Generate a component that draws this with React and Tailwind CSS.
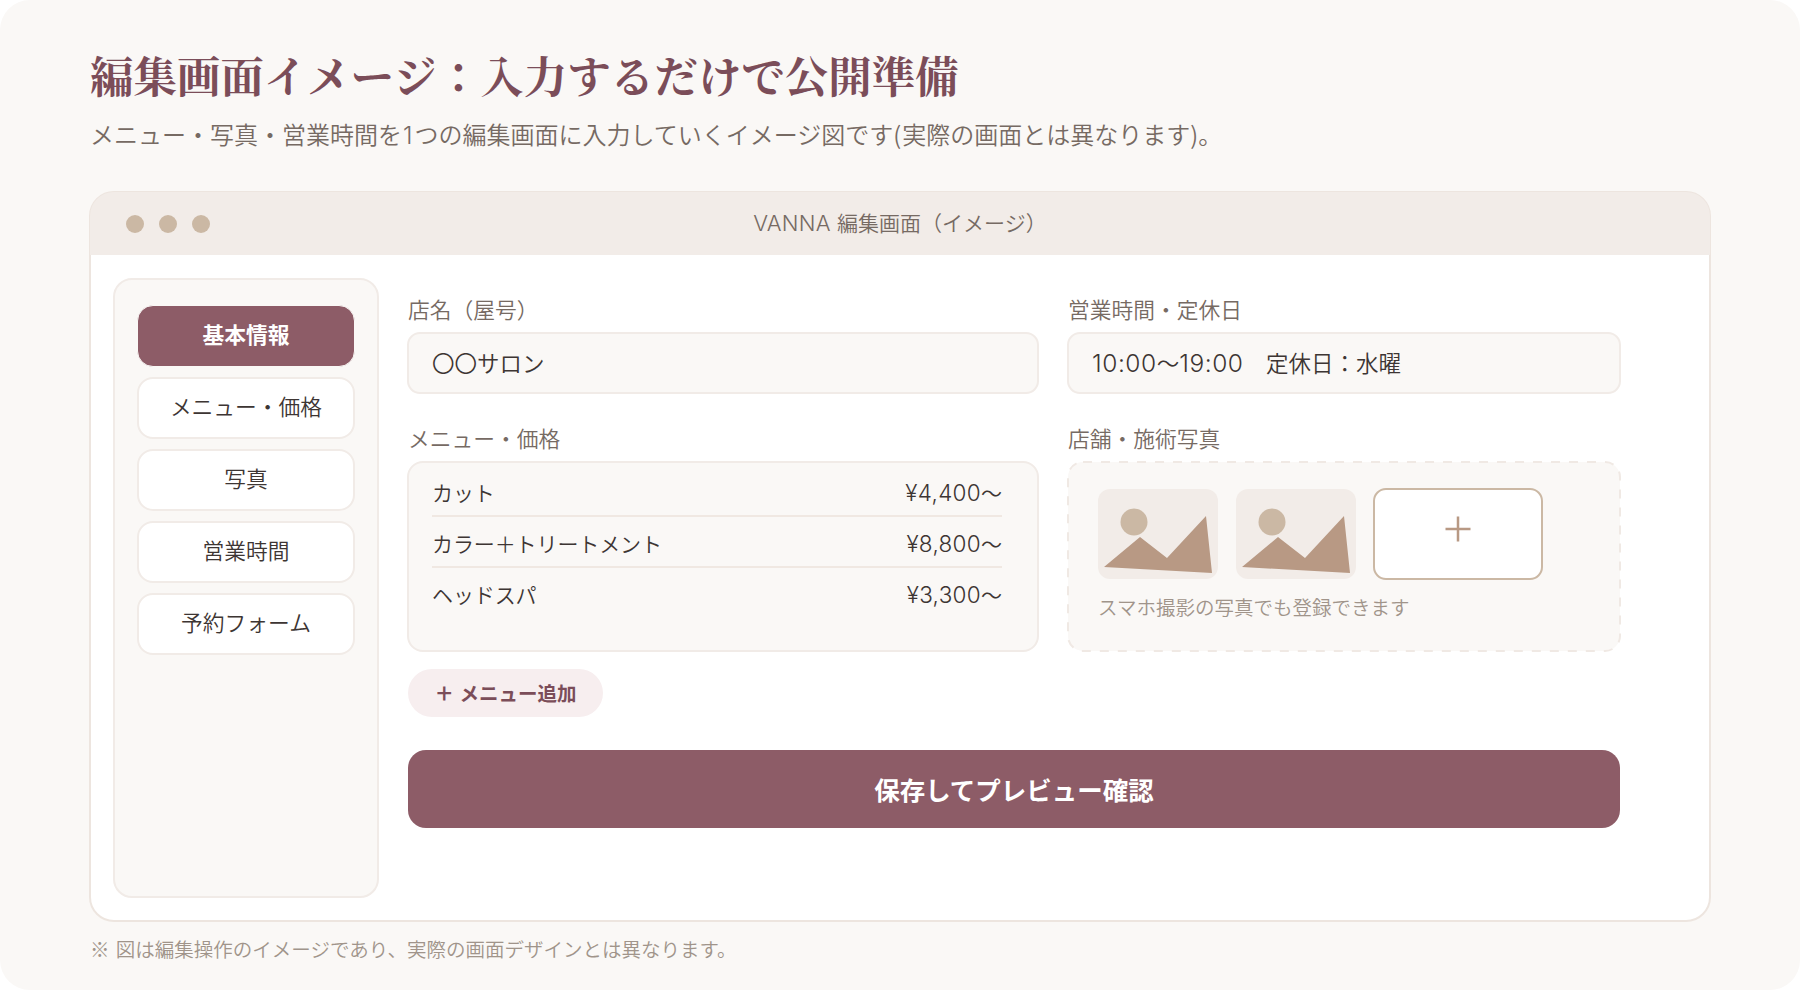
const NAV = ['基本情報', 'メニュー・価格', '写真', '営業時間', '予約フォーム'];

const MENU = [
  { name: 'カット', price: '¥4,400' },
  { name: 'カラー＋トリートメント', price: '¥8,800' },
  { name: 'ヘッドスパ', price: '¥3,300' },
];

function Label({ children }) {
  return (
    <div className="-mt-0.5 ml-px h-11 whitespace-nowrap text-[21.75px] leading-[42px] font-[350] text-[#766a63]">{children}</div>
  );
}

function Field({ children }) {
  return (
    <div className="h-[62px] rounded-[13px] border-2 border-[#f1ebe7] bg-[#faf8f6] pl-[23px] text-[22.5px] leading-[56px] font-[350] whitespace-pre text-[#3d3533]">
      {children}
    </div>
  );
}

function Time({ children }) {
  return <span className="font-['Inter'] text-[24.5px] leading-none font-light tracking-[0.55px]">{children}</span>;
}

function Thumb() {
  return (
    <svg className="h-[90px] w-[120px] shrink-0" viewBox="0 0 120 90">
      <rect width="120" height="90" rx="12" fill="#f2ece8" />
      <circle cx="36" cy="33" r="13.5" fill="#cbb8a4" />
      <path d="M6 78 42 48 69 69 108 27 114 84Z" fill="#b89984" />
    </svg>
  );
}

export default function App() {
  return (
    <div className="h-[990px] w-[1800px] overflow-hidden bg-white font-['Noto_Sans_CJK_JP',sans-serif]">
      <div className="flex h-full flex-col rounded-[30px] bg-[#faf8f6] px-[89px]">
        <h1 className="mt-[39px] ml-px h-[70px] font-['Noto_Serif_CJK_JP','Noto_Serif_JP','Noto_Sans_CJK_JP',serif] text-[43.5px] leading-[70px] font-bold whitespace-nowrap text-[#7b4d59]">
          編集画面イメージ：入力するだけで公開準備
        </h1>
        <p className="mt-[5px] ml-px h-10 text-[24px] leading-10 font-[350] whitespace-nowrap text-[#766a63]">
          メニュー・写真・営業時間を<span className="pr-[2px] pl-px font-['Inter'] leading-none font-light">1</span>つの編集画面に入力していくイメージ図です<span className="pr-px">(</span>実際の画面とは異なります)。
        </p>

        <div className="mt-[37px] h-[731px] rounded-[25px] border-2 border-[#ede5df] bg-white">
          <div className="-mx-px -mt-px flex h-[63px] items-center rounded-t-[24px] bg-[#f2ece8] px-9">
            <div className="flex w-[300px] gap-[15px]">
              <i className="size-[18px] rounded-full bg-[#cbb8a4]" />
              <i className="size-[18px] rounded-full bg-[#cbb8a4]" />
              <i className="size-[18px] rounded-full bg-[#cbb8a4]" />
            </div>
            <div className="-mt-0.5 flex-1 text-center text-[21px] leading-[61px] font-[350] whitespace-nowrap text-[#766a63]">
              <span className="font-['Inter'] text-[22px] leading-none font-light tracking-[0.2px]">VANNA </span>編集画面（イメージ）
            </div>
            <div className="w-[300px]" />
          </div>

          <div className="flex pt-[23px] pl-[22px]">
            <nav className="flex h-[620px] w-[266px] flex-col gap-[10px] rounded-[19px] border-2 border-[#f1ebe7] bg-[#faf8f6] px-[22px] pt-[25px]">
              {NAV.map((item, i) => (
                <div
                  key={item}
                  className={
                    i === 0
                      ? 'h-[62px] shrink-0 rounded-[16px] border border-[#faf8f6] bg-[#8d5c67] text-center text-[21.75px] leading-[56px] font-bold whitespace-nowrap text-white'
                      : 'h-[62px] shrink-0 rounded-[16px] border-2 border-[#f1ebe7] bg-white text-center text-[21.75px] leading-[54px] font-[350] whitespace-nowrap text-[#3d3533]'
                  }
                >
                  {item}
                </div>
              ))}
            </nav>

            <main className="ml-7 w-[1214px] pt-[12px]">
              <div className="grid grid-cols-[632px_554px] gap-x-7">
                <section>
                  <Label>店名（屋号）</Label>
                  <Field>〇〇サロン</Field>
                </section>
                <section>
                  <Label>営業時間・定休日</Label>
                  <Field>
                    <Time>10:00</Time>〜<Time>19:00</Time>　定休日：水曜
                  </Field>
                </section>
                <section className="mt-[25px]">
                  <Label>メニュー・価格</Label>
                  <div className="h-[191px] rounded-[16px] border-2 border-[#f1ebe7] bg-[#faf8f6] pt-[3px] pr-[35px] pl-[23px]">
                    {MENU.map((row) => (
                      <div
                        key={row.name}
                        className="flex h-[51px] justify-between border-b-2 border-[#f0e8e2] text-[21px] leading-[52px] font-[350] whitespace-nowrap text-[#3d3533] last:border-b-0"
                      >
                        <span className="tracking-[-0.1px]">{row.name}</span>
                        <span>
                          <span className="font-['Inter'] text-[22.5px] leading-none font-light tracking-[0.3px]">{row.price}</span>〜
                        </span>
                      </div>
                    ))}
                  </div>
                </section>
                <section className="mt-[25px]">
                  <Label>店舗・施術写真</Label>
                  <div className="relative h-[191px] pt-7 pl-[31px]">
                    <svg className="absolute top-0 left-0 h-[191px] w-[554px]" viewBox="0 0 554 191">
                      <rect x="1" y="1" width="552" height="189" rx="15" fill="#faf8f6" stroke="#f0e9e4" strokeWidth="2" strokeDasharray="9 9" />
                    </svg>
                    <div className="relative flex h-[90px] items-center gap-[18px]">
                      <Thumb />
                      <Thumb />
                      <div className="-ml-px flex h-[92px] w-[170px] justify-center rounded-[13px] border-2 border-[#cbb8a4] bg-white pt-[26px]">
                        <svg className="size-[26px]" viewBox="0 0 26 26" stroke="#b89984" strokeWidth="2.5">
                          <path d="M13 0.5V25.5M0.5 13H25.5" />
                        </svg>
                      </div>
                    </div>
                    <div className="relative mt-[11px] h-[34px] text-[19.5px] leading-[34px] font-[350] whitespace-nowrap text-[#a0948a]">
                      スマホ撮影の写真でも登録できます
                    </div>
                  </div>
                </section>
              </div>
              <div className="mt-[17px] ml-px flex h-12 w-[195px] items-center justify-center rounded-full bg-[#f7eeef] text-[19.5px] leading-[48px] font-bold whitespace-pre text-[#7b4d59]">
                <span className="pr-px font-black">＋</span> メニュー追加
              </div>
              <div className="mt-[33px] ml-px h-[78px] w-[1212px] rounded-[18px] bg-[#8d5c67] text-center text-[25.5px] leading-[77px] font-bold whitespace-nowrap text-white">
                保存してプレビュー確認
              </div>
            </main>
          </div>
        </div>

        <p className="mt-[10px] ml-px h-[34px] text-[19.5px] leading-[34px] font-[350] whitespace-nowrap text-[#a0948a]">
          <span className="tracking-[1px]">※ </span>図は編集操作のイメージであり、実際の画面デザインとは異なります。
        </p>
      </div>
    </div>
  );
}
